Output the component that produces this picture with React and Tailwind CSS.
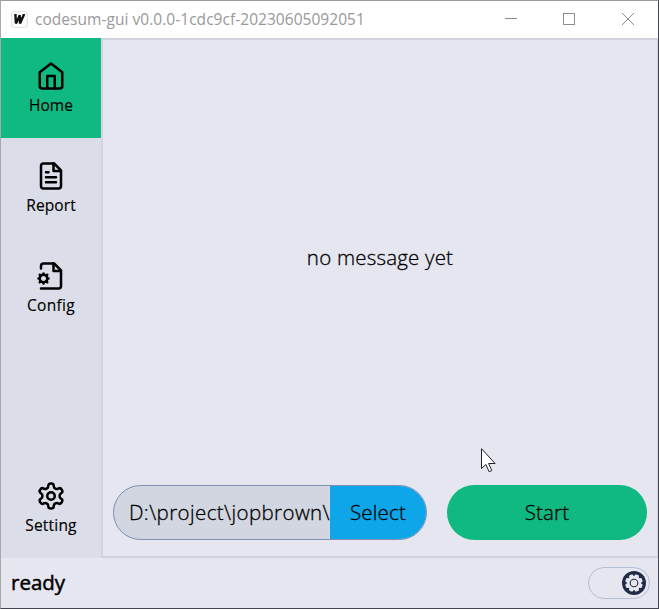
import React from "react";

function Icon({ children }) {
  return (
    <svg className="size-[30px]" viewBox="0 0 24 24" fill="none" stroke="currentColor" strokeWidth="2" strokeLinecap="round" strokeLinejoin="round">
      {children}
    </svg>
  );
}

function NavItem({ label, textClass, active, children }) {
  return (
    <button className={`flex h-[100px] w-full shrink-0 flex-col items-center pt-[23px] text-black ${active ? "bg-[#10b981]" : ""}`}>
      <Icon>{children}</Icon>
      <span className={`mt-[2px] whitespace-nowrap text-[15.5px] leading-6 [-webkit-text-stroke:0.15px_black] ${textClass}`}>{label}</span>
    </button>
  );
}

function TitleBar() {
  return (
    <header className="flex h-[37px] shrink-0 items-center bg-white pl-[10px] text-[#999]">
      <div className="flex size-[17px] items-center justify-center rounded-[3px] border border-[#e5e5e5] bg-[#fafafa]">
        <svg className="h-[11px] w-[13px]" viewBox="0 0 13 11" fill="none" stroke="#111" strokeWidth="2.4">
          <path d="M2.4 0 2.9 9.4 6.8 1.2 7 9.4 11.2 0" />
        </svg>
      </div>
      <span className="ml-[7px] whitespace-nowrap text-[15.5px] tracking-[0.04px]">codesum-gui v0.0.0-1cdc9cf-20230605092051</span>
      <svg className="ml-auto h-[37px] w-[160px]" viewBox="0 0 160 37" fill="none" stroke="#8c8c8c" shapeRendering="crispEdges">
        <path d="M7 17.5h12" />
        <path d="M65.5 12.5h11v11h-11z" />
        <path d="m124 12 12 12M136 12l-12 12" shapeRendering="auto" />
      </svg>
    </header>
  );
}

function Sidebar() {
  return (
    <nav className="flex w-[100px] shrink-0 flex-col bg-[#dbdde8]">
      <NavItem label="Home" active textClass="tracking-[0.1px]">
        <path d="m3 9 9-7 9 7v11a2 2 0 0 1-2 2H5a2 2 0 0 1-2-2z" />
        <path d="M9 22V12h6v10" />
      </NavItem>
      <NavItem label="Report" textClass="tracking-[0.1px]">
        <path d="M14.5 2H6a2 2 0 0 0-2 2v16a2 2 0 0 0 2 2h12a2 2 0 0 0 2-2V7.5L14.5 2z" />
        <path d="M14 2v6h6M16 13H8M16 17H8M10 9H8" />
      </NavItem>
      <NavItem label="Config" textClass="tracking-[0.3px]">
        <path d="M4 22h14a2 2 0 0 0 2-2V7.5L14.5 2H6a2 2 0 0 0-2 2v2" />
        <path d="M14 2v6h6" />
        <circle cx="6" cy="14" r="3" />
        <path d="M6 10v1M6 17v1M10 14H9M3 14H2M9 11l-.88.88M3.88 16.12 3 17M9 17l-.88-.88M3.88 11.88 3 11" />
      </NavItem>
      <div className="mt-auto">
        <NavItem label="Setting" textClass="tracking-[0.2px]">
          <path d="M12.22 2h-.44a2 2 0 0 0-2 2v.18a2 2 0 0 1-1 1.73l-.43.25a2 2 0 0 1-2 0l-.15-.08a2 2 0 0 0-2.73.73l-.22.38a2 2 0 0 0 .73 2.73l.15.1a2 2 0 0 1 1 1.72v.51a2 2 0 0 1-1 1.74l-.15.09a2 2 0 0 0-.73 2.73l.22.38a2 2 0 0 0 2.73.73l.15-.08a2 2 0 0 1 2 0l.43.25a2 2 0 0 1 1 1.73V20a2 2 0 0 0 2 2h.44a2 2 0 0 0 2-2v-.18a2 2 0 0 1 1-1.73l.43-.25a2 2 0 0 1 2 0l.15.08a2 2 0 0 0 2.73-.73l.22-.39a2 2 0 0 0-.73-2.73l-.15-.08a2 2 0 0 1-1-1.74v-.5a2 2 0 0 1 1-1.74l.15-.09a2 2 0 0 0 .73-2.73l-.22-.38a2 2 0 0 0-2.73-.73l-.15.08a2 2 0 0 1-2 0l-.43-.25a2 2 0 0 1-1-1.73V4a2 2 0 0 0-2-2z" />
          <circle cx="12" cy="12" r="3" />
        </NavItem>
      </div>
    </nav>
  );
}

function GearKnob() {
  return (
    <svg className="size-6" viewBox="0 0 24 24">
      <circle cx="12" cy="12" r="12" fill="#222b45" />
      <g fill="#e5e6f0">
        <circle cx="12" cy="12" r="6.7" />
        {[0, 45, 90, 135, 180, 225, 270, 315].map((a) => (
          <path key={a} d="M9.1 6.5 10.3 3.2h3.4l1.2 3.3z" transform={`rotate(${a + 22.5} 12 12)`} />
        ))}
      </g>
      <circle cx="12" cy="12" r="3.8" fill="#e5e6f0" stroke="#222b45" strokeWidth="1.1" />
    </svg>
  );
}

export default function App() {
  return (
    <div className="relative flex h-[609px] w-[659px] flex-col overflow-hidden border border-b-[#454550] border-l-[#a8a8a8] border-r-[#454550] border-t-[#9b9b9b] bg-[#e5e6f0] font-['Open_Sans','Noto_Sans',sans-serif] text-black">
      <TitleBar />
      <div className="flex h-[520px] shrink-0">
        <Sidebar />
        <main className="flex min-w-0 flex-1 flex-col border-2 border-r border-[#d2d3de]">
          <div className="flex flex-1 items-center justify-center pb-[10px] text-[20.5px] font-light tracking-[0.2px] [-webkit-text-stroke:0.3px_black]">
            <span className="whitespace-nowrap">no message yet</span>
          </div>
          <div className="mb-4 ml-[10px] mr-[10px] flex h-[55px] shrink-0 gap-5 text-[20.5px] font-light [-webkit-text-stroke:0.3px_black]">
            <div className="flex w-[314px] overflow-hidden rounded-full border border-[#7f8fb2] bg-[#d2d6e1]">
              <div className="flex w-[216px] shrink-0 items-center overflow-hidden pl-[15px]">
                <span className="whitespace-nowrap tracking-[0.4px]">D:\project\jopbrown\</span>
              </div>
              <button className="flex flex-1 items-center justify-center bg-[#0ea5e9] tracking-[0.2px]">Select</button>
            </div>
            <button className="flex-1 rounded-full bg-[#10b981] tracking-[0.2px]">Start</button>
          </div>
        </main>
      </div>
      <footer className="flex min-h-0 flex-1 items-center justify-between pl-[10px] pr-2">
        <span className="pb-0.5 text-[20.5px] [-webkit-text-stroke:0.5px_black]">ready</span>
        <div className="flex h-8 w-[62px] items-center justify-end rounded-full border border-[#b4c0d5] pr-[3px]">
          <GearKnob />
        </div>
      </footer>
      <svg className="absolute left-[480px] top-[447px] h-[25px] w-[16px]" viewBox="0 0 16 25">
        <path d="M.5.7v19.8l4.4-4 3.2 7.2 2.7-1.2-3.2-7h6.5z" fill="white" stroke="#202030" strokeWidth="1" />
      </svg>
      <div className="absolute -top-px left-[419px] h-px w-[239px] bg-[#454550]" />
      <div className="absolute -left-px top-[474px] h-[134px] w-px bg-[#454550]" />
      <div className="absolute -left-px top-[489px] h-2 w-px bg-[#c59a55]" />
    </div>
  );
}
